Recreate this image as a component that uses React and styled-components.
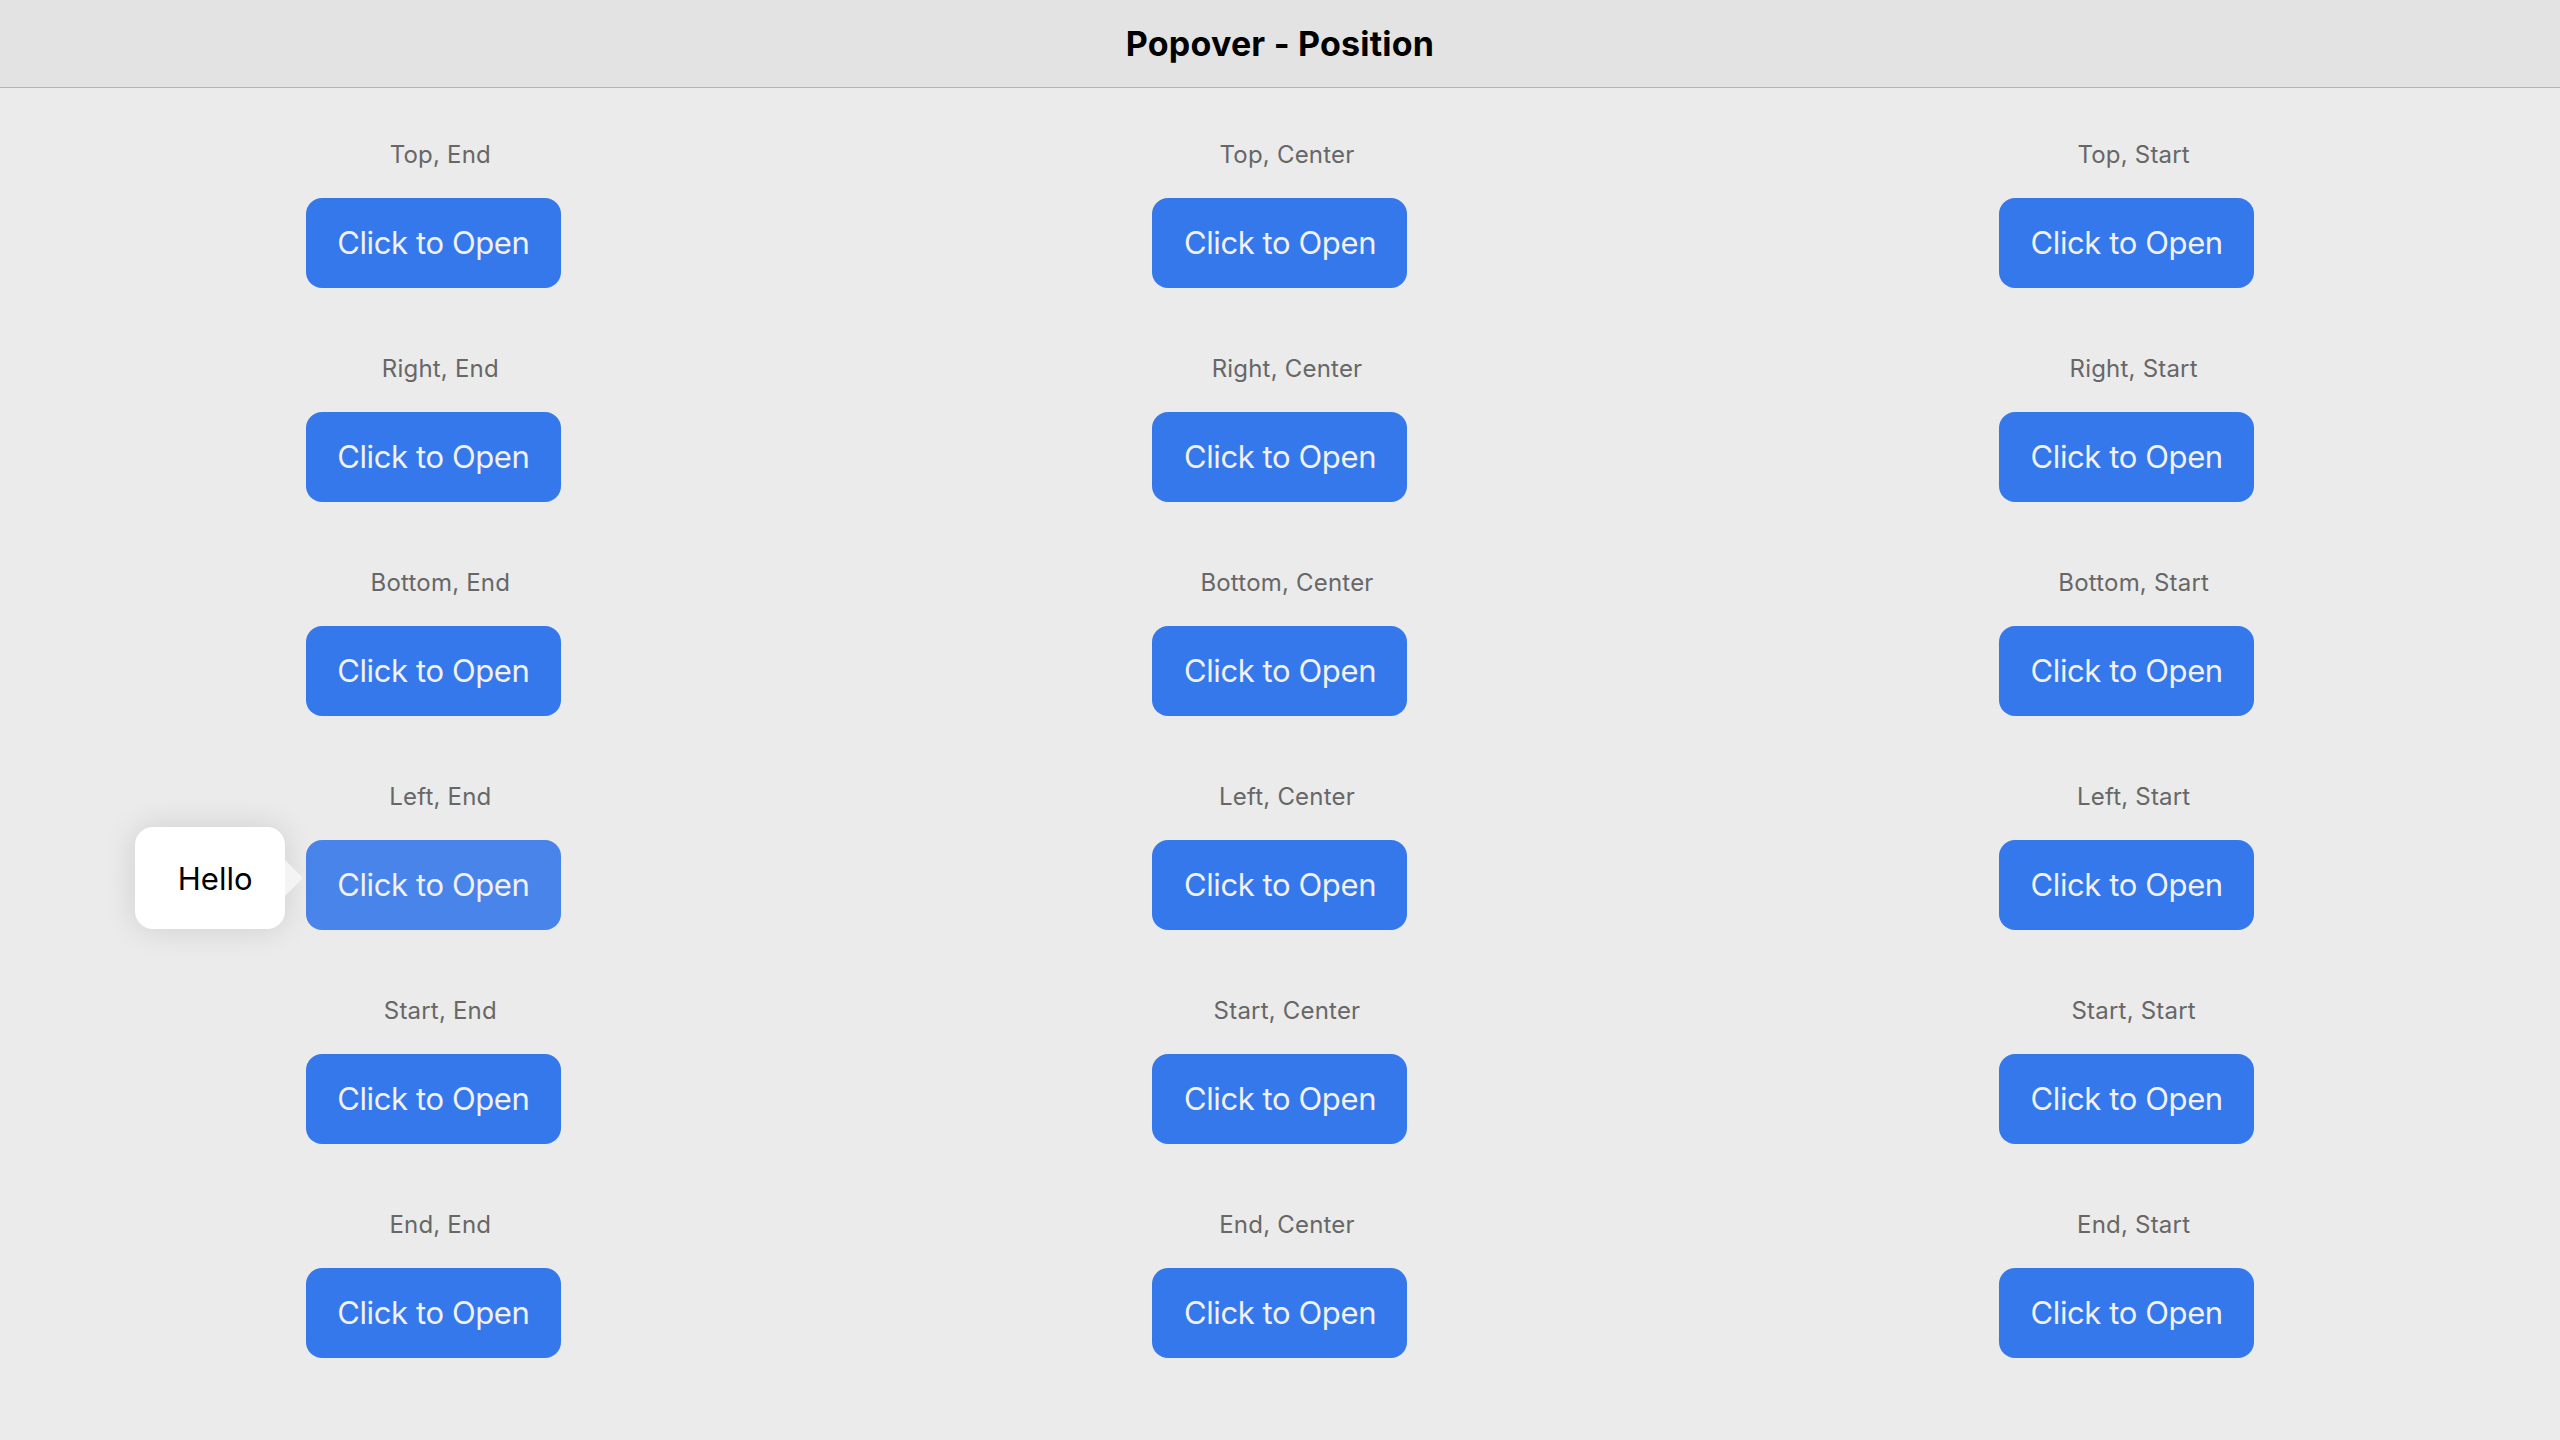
import React from "react";
import styled, { createGlobalStyle } from "styled-components";

const GlobalStyle = createGlobalStyle`
  html, body {
    margin: 0;
    padding: 0;
    background: #ebebeb;
    font-family: Inter, "Noto Sans", "Liberation Sans", sans-serif;
  }
`;

const Page = styled.div`
  min-height: 1440px;
  background: #ebebeb;
`;

const Header = styled.header`
  height: 87px;
  display: flex;
  align-items: center;
  justify-content: center;
  background: #e3e3e3;
  border-bottom: 1px solid #b4b4b4;
`;

const Title = styled.h1`
  margin: 0;
  font-size: 34px;
  font-weight: 700;
  color: #000;
  letter-spacing: 0.2px;
`;

const Grid = styled.div`
  display: grid;
  grid-template-columns: repeat(3, 1fr);
  padding: 10px;
`;

const Cell = styled.div`
  display: flex;
  flex-direction: column;
  align-items: center;
  padding: 42px 10px 24px;
`;

const Label = styled.div`
  height: 30px;
  line-height: 30px;
  padding-left: 14px;
  font-size: 24px;
  color: #676767;
  letter-spacing: 0.2px;
  margin-bottom: 28px;
`;

const ButtonWrap = styled.div`
  position: relative;
`;

const OpenButton = styled.button`
  width: 255px;
  height: 90px;
  padding: 0 0 2px;
  border: none;
  border-radius: 16px;
  background: ${(p) => (p.$active ? "#4984ea" : "#3578eb")};
  color: #f1f1f1;
  font-family: inherit;
  font-size: 31px;
  font-weight: 400;
  letter-spacing: -0.4px;
  cursor: pointer;
`;

const Popover = styled.div`
  position: absolute;
  top: -13px;
  right: calc(100% + 21px);
  width: 150px;
  height: 102px;
  box-sizing: border-box;
  padding-left: 43px;
  display: flex;
  align-items: center;
  background: #fff;
  border-radius: 18px;
  box-shadow: 0 0 32px rgba(0, 0, 0, 0.12);
  font-size: 31px;
  color: #000;

  &::after {
    content: "";
    position: absolute;
    left: 100%;
    top: 50%;
    transform: translateY(-50%);
    border-top: 18px solid transparent;
    border-bottom: 18px solid transparent;
    border-left: 18px solid #f4f4f4;
  }
`;

const rows = ["Top", "Right", "Bottom", "Left", "Start", "End"];
const cols = ["End", "Center", "Start"];

export default function App() {
  return (
    <Page>
      <GlobalStyle />
      <Header>
        <Title>Popover - Position</Title>
      </Header>
      <Grid>
        {rows.map((side) =>
          cols.map((align) => {
            const open = side === "Left" && align === "End";
            return (
              <Cell key={side + align}>
                <Label>
                  {side}, {align}
                </Label>
                <ButtonWrap>
                  {open && <Popover>Hello</Popover>}
                  <OpenButton $active={open}>Click to Open</OpenButton>
                </ButtonWrap>
              </Cell>
            );
          })
        )}
      </Grid>
    </Page>
  );
}
